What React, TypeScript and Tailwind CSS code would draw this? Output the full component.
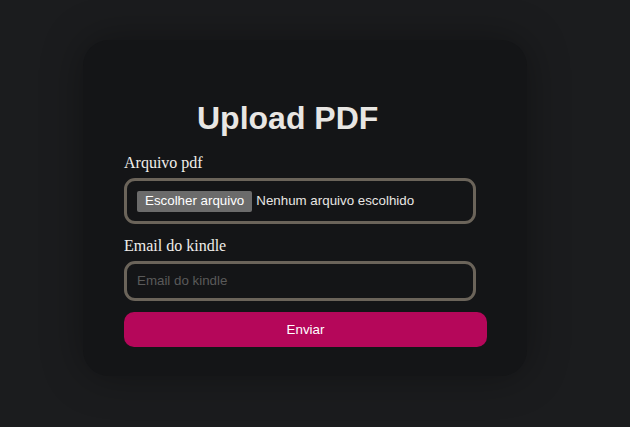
export default function App() {
  return (
    <div className="w-[630px] h-[427px] bg-[#1b1c1e] overflow-hidden pt-[40px] pl-[83px]">
      <div className="w-[444px] h-[336px] rounded-[26px] bg-[#141517] shadow-[0_0_40px_rgba(0,0,0,0.35)] pt-[60px] pl-[41px]">
        <h1 className="ml-[73px] text-[32px] leading-[37px] font-bold text-[#e8e6e3] font-['Liberation_Sans',Arial,sans-serif]">
          Upload PDF
        </h1>
        <div className="mt-[17px] text-[16px] leading-[18px] text-[#f0eeea] font-['Liberation_Serif','Times_New_Roman',serif]">
          Arquivo pdf
        </div>
        <div className="mt-[6px] w-[352px] h-[46px] border-[3px] border-[#6b645a] rounded-[11px] flex items-center pl-[10px] font-['Liberation_Sans',Arial,sans-serif] text-[13.33px] text-[#e8e6e3]">
          <span className="h-[21px] px-[8px] bg-[#6b6b6b] rounded-[2px] flex items-center text-white">
            Escolher arquivo
          </span>
          <span className="ml-[4px]">Nenhum arquivo escolhido</span>
        </div>
        <div className="mt-[13px] text-[16px] leading-[18px] text-[#f0eeea] font-['Liberation_Serif','Times_New_Roman',serif]">
          Email do kindle
        </div>
        <div className="mt-[6px] w-[352px] h-[40px] border-[3px] border-[#6b645a] rounded-[11px] flex items-center pl-[10px] font-['Liberation_Sans',Arial,sans-serif] text-[13.33px] text-[#5a5a5a]">
          Email do kindle
        </div>
        <div className="mt-[11px] w-[363px] h-[35px] rounded-[10px] bg-[#b5075a] flex items-center justify-center font-['Liberation_Sans',Arial,sans-serif] text-[13.33px] text-white">
          Enviar
        </div>
      </div>
    </div>
  );
}
